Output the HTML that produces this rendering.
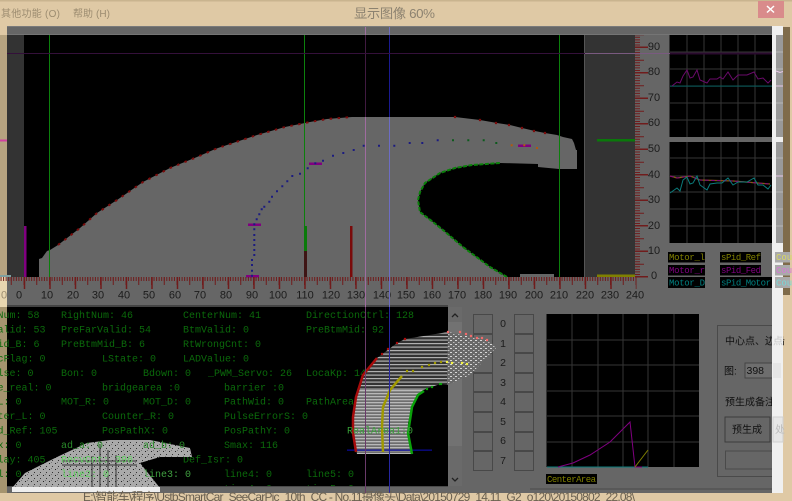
<!DOCTYPE html>
<html lang="zh">
<head>
<meta charset="utf-8">
<title>显示图像 60%</title>
<style>
html,body{margin:0;padding:0;width:792px;height:501px;overflow:hidden;background:#dfc9a5}
svg{display:block;filter:blur(.25px)}
.cn{font-family:"Liberation Sans","Noto Sans CJK SC",sans-serif}
.ax{font-family:"Liberation Sans",sans-serif;font-size:11px;fill:#1c1c1c;text-anchor:middle}
.m{font-family:"Liberation Mono",monospace;font-size:10px;fill:#0b6a0b;white-space:pre}
.l{font-family:"Liberation Mono",monospace;font-size:9px}
.b{fill:#666;stroke:#484848;stroke-width:1}
</style>
</head>
<body>
<svg width="792" height="501" viewBox="0 0 792 501" xmlns="http://www.w3.org/2000/svg">
<defs>
<clipPath id="tc"><rect x="-5" y="307" width="453" height="179"/></clipPath>
<pattern id="st" width="6" height="3" patternUnits="userSpaceOnUse"><rect width="6" height="3" fill="#6e6e6e"/><rect width="6" height="1.300" fill="#b8b8b8"/></pattern>
<pattern id="st2" width="6" height="3.500" patternUnits="userSpaceOnUse"><rect width="6" height="3.500" fill="#333"/><rect width="6" height="1.200" fill="#b0b0b0"/></pattern>
<pattern id="dt" width="5" height="4" patternUnits="userSpaceOnUse"><rect width="5" height="4" fill="#686868"/><rect width="2" height="1" fill="#d8d8d8"/><rect x="3" y="2" width="1.500" height="1" fill="#c0c0c0"/></pattern>
<pattern id="sp" width="6" height="6" patternUnits="userSpaceOnUse"><rect width="6" height="6" fill="#aaa"/><rect x="1" y="1" width="1" height="1" fill="#222"/><rect x="4" y="4" width="1" height="1" fill="#333"/><rect x="3" y="0" width="1" height="1" fill="#777"/></pattern>
</defs>

<!-- title area -->
<rect width="792" height="501" fill="#dfc9a5"/>
<rect width="792" height="1.500" fill="#c9b48f"/>
<g class="cn">
<text x="1" y="17" font-size="10" fill="#9c8c70" textLength="59">其他功能 (O)</text>
<text x="73" y="17" font-size="10" fill="#9c8c70" textLength="37">帮助 (H)</text>
<text x="354" y="18" font-size="13.300" fill="#8c8270" textLength="81">显示图像 60%</text>
</g>
<rect x="758" y="1" width="26" height="17" fill="#d98b8b"/>
<path d="M767 6l7 6.500M774 6l-7 6.500" stroke="#fff" stroke-width="1.500"/>

<!-- left strip -->
<rect x="0" y="35" width="7" height="242" fill="#b6a380"/>
<rect x="0" y="277" width="7" height="30" fill="#e8d6b0"/>
<rect x="0" y="307" width="7" height="186" fill="#a5946f"/>
<rect x="0" y="139.500" width="11" height="2" fill="#d040a0"/>

<!-- window -->
<rect x="7" y="26" width="765" height="467" fill="#666"/>
<rect x="7" y="26" width="765" height="1" fill="#7a7a7a"/>
<rect x="7" y="34" width="765" height="1" fill="#757575"/>
<rect x="7" y="35" width="17" height="242" fill="#333"/>
<rect x="24" y="35" width="561" height="242" fill="#000"/>
<rect x="584" y="35" width="1" height="242" fill="#555"/>
<rect x="585" y="35" width="50" height="242" fill="#333"/>

<!-- road shape -->
<path fill="#666" d="M39 277V259L42 258L47 251L50 250L58 245L80 228L97 213L117 200L143 182L170 168L197 157L213 150L218 148L233 143L257 135L285 127L310 122L327 119L352 117H455L480 120L497 123L510 125L522 128L535 131L545 133L557 135L563 137L572 139L574 143L576 150L577 150V169H559L538 167V164L500 163L472 165L455 168L440 173L425 183L420 192L418 200L420 212L433 222L443 230L463 247L490 267L507 277Z"/>
<rect x="520" y="274" width="34" height="3" fill="#666"/>
<polyline fill="none" stroke="#7c0c0c" stroke-width="2" stroke-dasharray="2.500 5.500" points="58,245 80,228 97,213 117,200 143,182 170,168 197,157 213,150 218,148 233,143 257,135 285,127 310,122 327,119 352,117"/>
<path d="M455 117h0M480 120h0M496 123h0M509 125h0M522 128h0M534 131h0M545 133h0" stroke="#7c0c0c" stroke-width="2.200" stroke-linecap="square"/>
<polyline fill="none" stroke="#0a800a" stroke-width="2" stroke-dasharray="4 1.500" points="507,277 490,267 463,247 443,230 433,222 420,212 418,200 420,192 425,183 440,173 455,168 472,165 500,163"/>

<!-- vertical lines -->
<rect x="49" y="35" width="1" height="242" fill="#0c800c"/>
<rect x="304" y="35" width="1" height="242" fill="#0c800c"/>
<rect x="559" y="35" width="1" height="242" fill="#0c800c"/>

<!-- bars -->
<rect x="24" y="226" width="2.500" height="51" fill="#800080"/>
<rect x="304" y="226" width="3" height="25" fill="#0a7a0a"/>
<rect x="304" y="251" width="3" height="26" fill="#3e1414"/>
<rect x="350" y="226" width="2.500" height="51" fill="#7a0a0a"/>
<rect x="248" y="223.500" width="13" height="2.500" fill="#800080"/>
<rect x="246" y="275" width="13" height="2.500" fill="#800080"/>
<rect x="309" y="162.500" width="13" height="2.500" fill="#800080"/>
<rect x="518" y="144.500" width="13" height="2.500" fill="#800080"/>
<rect x="597" y="139" width="38" height="2.500" fill="#0a780a"/>
<rect x="597" y="274.500" width="38" height="2.500" fill="#808000"/>
<rect x="0" y="275" width="11" height="2" fill="#7fa0a0"/>

<!-- center dots -->
<path fill="none" stroke="#1c1c80" stroke-width="2" stroke-linecap="square" d="M252 275.700h0M252 270.700h0M252 265h0M252 260h0M254.300 255h0M254.300 250h0M254.300 245h0M254.300 240h0M254.300 235h0M254.300 229.300h0M254.300 224.300h0M256.700 219.300h0M259.300 214.300h0M261.700 209.300h0M264.300 206.700h0M269.300 201.700h0M272 196.700h0M277 191.300h0M282.300 186.300h0M287.300 181.300h0M292.300 176h0M300 173.700h0M307.700 168.300h0M315.300 163.300h0M323 160.700h0M333 155.700h0M343.300 153h0M353.700 150h0M363.700 145.700h0M379 145.700h0M394.300 145.700h0M409.700 143h0M422.300 143h0M437.700 140.300h0"/>
<path fill="none" stroke="#0c5a1c" stroke-width="2" stroke-linecap="square" d="M453 140.300h0M468.300 140.300h0M483.700 140.300h0M496.300 143h0"/>
<path fill="none" stroke="#b05a10" stroke-width="2" stroke-linecap="square" d="M511.700 145.300h0M524.300 145.300h0M537 148h0"/>

<!-- axis ticks -->
<g stroke="#701c1c" fill="none">
<line x1=".55" x2="636.500" y1="279" y2="279" stroke-width="4" stroke-dasharray="1 1.550"/>
<line x1="10.750" x2="636.500" y1="281" y2="281" stroke-width="8" stroke-dasharray="1 11.750"/>
<line x1="-1.750" x2="636.500" y1="283" y2="283" stroke-width="12" stroke-dasharray="1.500 24"/>
<line x1="637.500" x2="637.500" y1="277.500" y2="35" stroke-width="5" stroke-dasharray="1 1.550"/>
<line x1="639.500" x2="639.500" y1="264.750" y2="35" stroke-width="9" stroke-dasharray="1 11.750"/>
<line x1="641.500" x2="641.500" y1="277.500" y2="35" stroke-width="13" stroke-dasharray="1.500 24"/>
</g>

<!-- axis labels -->
<g class="ax">
<text x="4" y="298.500" style="fill:#9c8c70">0</text>
<text x="19" y="298.500">0</text><text x="47" y="298.500">10</text><text x="73" y="298.500">20</text><text x="98" y="298.500">30</text><text x="124" y="298.500">40</text><text x="149" y="298.500">50</text><text x="175" y="298.500">60</text><text x="200" y="298.500">70</text><text x="226" y="298.500">80</text><text x="252" y="298.500">90</text><text x="278" y="298.500">100</text><text x="305" y="298.500">110</text><text x="331" y="298.500">120</text><text x="356" y="298.500">130</text><text x="382" y="298.500">140</text><text x="406" y="298.500">150</text><text x="432" y="298.500">160</text><text x="457" y="298.500">170</text><text x="483" y="298.500">180</text><text x="508" y="298.500">190</text><text x="534" y="298.500">200</text><text x="559" y="298.500">210</text><text x="585" y="298.500">220</text><text x="610" y="298.500">230</text><text x="635" y="298.500">240</text>
<text x="654" y="50">90</text><text x="654" y="75">80</text><text x="654" y="101">70</text><text x="654" y="126">60</text><text x="654" y="152">50</text><text x="654" y="178">40</text><text x="654" y="203">30</text><text x="654" y="229">20</text><text x="654" y="254">10</text><text x="654" y="279">0</text>
</g>

<!-- top right graph 1 -->
<rect x="669.500" y="35" width="103" height="102" fill="#000"/>
<path stroke="#363636" fill="none" d="M687 35V137M704 35V137M721 35V137M738 35V137M755 35V137M670 52H772M670 69H772M670 86H772M670 103H772M670 120H772"/>
<rect x="670" y="85.500" width="102" height="1.200" fill="#0b5555"/>
<polyline fill="none" stroke="#6a0a6a" stroke-width="1" points="672,86 677,82 680,83 683,76 687,70 690,78 693,77 697,70 700,80 707,83 710,79 717,79 720,77 723,79 728,72 733,80 738,75 747,75 754,72 758,79 763,78 768,83 771,80"/>

<!-- top right graph 2 -->
<rect x="669.500" y="142" width="103" height="101" fill="#000"/>
<path stroke="#363636" fill="none" d="M687 142V243M704 142V243M721 142V243M738 142V243M755 142V243M670 158H772M670 176H772M670 192H772M670 209H772M670 226H772"/>
<polyline fill="none" stroke="#806a00" stroke-width="1.200" points="670,176 677,178 690,176 700,180 733,181 770,184"/>
<polyline fill="none" stroke="#800080" stroke-width="1" stroke-dasharray="4 2" points="670,176 677,178 690,176 700,180 733,181 770,184"/>
<polyline fill="none" stroke="#0b7b7b" stroke-width="1" points="670,193 677,188 680,191 683,180 687,177 690,184 693,183 697,176 700,185 707,190 710,184 717,183 722,183 728,178 733,185 738,182 747,182 754,178 758,185 763,185 768,189 771,185"/>

<!-- legends -->
<rect x="668" y="252" width="37" height="10.500" fill="#000"/><rect x="668" y="265" width="37" height="10.500" fill="#000"/><rect x="668" y="277" width="37" height="11" fill="#000"/>
<rect x="720" y="252" width="41" height="10.500" fill="#000"/><rect x="720" y="265" width="41" height="10.500" fill="#000"/><rect x="720" y="277" width="52" height="11" fill="#000"/>
<g class="l">
<text x="669" y="260" fill="#808000" textLength="36">Motor_l</text><text x="669" y="273" fill="#800080" textLength="36">Motor_r</text><text x="669" y="285.500" fill="#008080" textLength="36">Motor_D</text>
<text x="721" y="260" fill="#808000" textLength="40">sPid_Ref</text><text x="721" y="273" fill="#800080" textLength="40">sPid_Fed</text><text x="721" y="285.500" fill="#008080" textLength="50">sPid_Motor</text>
</g>

<!-- text panel -->
<rect x="7" y="305" width="441" height="2" fill="#444"/>
<rect x="7" y="307" width="441" height="179" fill="#000"/>
<rect x="7" y="486" width="441" height="1" fill="#4a4a4a"/>
<g class="m" clip-path="url(#tc)">
<text x="-2.500" y="318">Num: 58</text><text x="61" y="318">RightNum: 46</text><text x="183" y="318">CenterNum: 41</text><text x="306" y="318">DirectionCtrl: 128</text>
<text x="-2.500" y="332.500">alid: 53</text><text x="61" y="332.500">PreFarValid: 54</text><text x="183" y="332.500">BtmValid: 0</text><text x="306" y="332.500">PreBtmMid: 92</text>
<text x="-2.500" y="347">id_B: 6</text><text x="61" y="347">PreBtmMid_B: 6</text><text x="183" y="347">RtWrongCnt:  0</text>
<text x="-2.500" y="361.400">cFlag: 0</text><text x="102" y="361.400">LState: 0</text><text x="183" y="361.400">LADValue: 0</text>
<text x="-2.500" y="375.800">lse: 0</text><text x="61" y="375.800">Bon: 0</text><text x="143" y="375.800">Bdown: 0</text><text x="208" y="375.800">_PWM_Servo: 26</text><text x="306" y="375.800">LocaKp: 1464</text>
<text x="-2.500" y="390.300">e_real: 0</text><text x="102" y="390.300">bridgearea :0</text><text x="224" y="390.300">barrier :0</text>
<text x="-2.500" y="404.700">L: 0</text><text x="61" y="404.700">MOT_R: 0</text><text x="143" y="404.700">MOT_D: 0</text><text x="224" y="404.700">PathWid: 0</text><text x="306" y="404.700">PathArea: 0</text>
<text x="-2.500" y="419.200">ter_L: 0</text><text x="102" y="419.200">Counter_R: 0</text><text x="224" y="419.200">PulseErrorS: 0</text>
<text x="-2.500" y="433.600">d_Ref: 105</text><text x="102" y="433.600">PosPathX: 0</text><text x="224" y="433.600">PosPathY: 0</text>
<text x="-2.500" y="448">x: 0</text><text x="224" y="448">Smax: 116</text>
<text x="-2.500" y="462.500">lay: 405</text><text x="183" y="462.500">Def_Isr: 0</text>
<text x="-2.500" y="476.900">l: 0</text><text x="224" y="476.900">line4: 0</text><text x="306" y="476.900">line5: 0</text>
<text x="224" y="491.300">time4: 0</text><text x="306" y="491.300">time5: 0</text>
</g>

<!-- mini camera image -->
<path fill="url(#sp)" d="M12 488L25 473L57 457L87 443L110 440H150L190 448L192 457H160L140 463L160 488Z"/>
<rect x="12" y="487" width="148" height="5" fill="#eee"/>
<path d="M62 461H137M62 465H137M100 445V487M108 450V487M116 455V487M92 456V487" stroke="#333" stroke-width="1" fill="none"/>
<g class="m">
<text x="61" y="448" style="fill:#2a8a2a">ad_a: 0</text>
<text x="143" y="448" style="fill:#2a8a2a">ad_b: 0</text>
<text x="61" y="462.500" style="fill:#60d060">RecvCnt: 396</text>
<text x="61" y="476.900" style="fill:#60d060">line2: 0</text>
<text x="143" y="476.900" style="fill:#40a040">line3: 0</text>
</g>

<!-- scrollbar -->
<rect x="448" y="307" width="14" height="179" fill="#6a6a6a"/>
<rect x="448" y="322" width="14" height="124" fill="#727272"/>
<path d="M452 317l3-3 3 3M452 478l3 3 3-3" stroke="#222" stroke-width="1.300" fill="none"/>

<!-- buttons -->
<g>
<rect class="b" x="473.500" y="314.500" width="19" height="19"/><rect class="b" x="473.500" y="334.500" width="19" height="18"/><rect class="b" x="473.500" y="353.500" width="19" height="19"/><rect class="b" x="473.500" y="373.500" width="19" height="18"/><rect class="b" x="473.500" y="392.500" width="19" height="19"/><rect class="b" x="473.500" y="412.500" width="19" height="19"/><rect class="b" x="473.500" y="432.500" width="19" height="18"/><rect class="b" x="473.500" y="451.500" width="19" height="19"/>
<rect class="b" x="514.500" y="314.500" width="19" height="19"/><rect class="b" x="514.500" y="334.500" width="19" height="18"/><rect class="b" x="514.500" y="353.500" width="19" height="19"/><rect class="b" x="514.500" y="373.500" width="19" height="18"/><rect class="b" x="514.500" y="392.500" width="19" height="19"/><rect class="b" x="514.500" y="412.500" width="19" height="19"/><rect class="b" x="514.500" y="432.500" width="19" height="18"/><rect class="b" x="514.500" y="451.500" width="19" height="19"/>
</g>
<g class="ax" style="font-size:10.500px">
<text x="503" y="327">0</text><text x="503" y="347">1</text><text x="503" y="366">2</text><text x="503" y="386">3</text><text x="503" y="405">4</text><text x="503" y="425">5</text><text x="503" y="444">6</text><text x="503" y="464">7</text>
</g>

<!-- perspective view -->
<path fill="url(#st)" d="M357 454L353 433V417L356 397L358 390H423L413 403L408 423L412 454Z"/>
<path fill="url(#st2)" d="M358 390L363 375L377 358L397 343L405 339L448 332V385L440 384L423 390Z"/>
<path fill="url(#dt)" d="M448 332L487 340L497 347L470 375L447 385Z"/>
<rect x="347" y="449.500" width="85" height="1.300" fill="#0a0a90"/>
<polyline fill="none" stroke="#a80c0c" stroke-width="2.500" points="356,452 353,433 353,417 356,397 363,375 377,358"/>
<path fill="none" stroke="#a80c0c" stroke-width="2.200" stroke-linecap="square" d="M382 354h0M388 349h0M397 343h0M405 339h0"/>
<path fill="none" stroke="#f06a6a" stroke-width="2.200" stroke-linecap="square" d="M448 332h0M460 332h0M466 334h0M471 336h0M477 338h0M482 338h0M487 340h0"/>
<polyline fill="none" stroke="#a09a00" stroke-width="2.500" points="383,452 382,427 383,407 390,390 402,376"/>
<path fill="none" stroke="#a09a00" stroke-width="2.200" stroke-linecap="square" d="M407 371h0M413 371h0M422 367h0M429 365h0M435 363h0M441 362h0"/>
<path fill="none" stroke="#f0f040" stroke-width="2.200" stroke-linecap="square" d="M447 362h0M452 363h0M462 363h0M467 364h0"/>
<polyline fill="none" stroke="#0aa00a" stroke-width="2.500" points="412,454 408,433 412,407 418,395 424,391"/>
<path fill="none" stroke="#0aa00a" stroke-width="2.200" stroke-linecap="square" d="M427 389h0M432 387h0M440 384h1"/>
<text class="m" x="347" y="433.600" style="fill:#38a038">RealArea1:0</text>

<!-- bottom graph -->
<rect x="546.500" y="314" width="152.500" height="153" fill="#000"/>
<path stroke="#363636" fill="none" d="M572 314V467M598 314V467M623 314V467M648 314V467M674 314V467M547 340H699M547 365H699M547 391H699M547 416H699M547 442H699"/>
<rect x="547" y="466.500" width="101" height="1" fill="#0b7b7b"/>
<polyline fill="none" stroke="#800080" stroke-width="1" points="558,467 573,463 590,455 610,442 630,422 635,467 642,467"/>
<polyline fill="none" stroke="#808000" stroke-width="1" points="635,467 648,450"/>
<rect x="546" y="474" width="51" height="10" fill="#000"/>
<text class="l" x="547" y="482" fill="#808000" textLength="49">CenterArea</text>

<!-- group box -->
<rect x="717.500" y="325.500" width="56" height="151" fill="none" stroke="#4a4a4a"/>
<g class="cn" font-size="10" fill="#111">
<text x="725" y="344.500">中心点、边沿</text>
<text x="724" y="374.500">图:</text>
<text x="725" y="405.500">预生成备注:</text>
</g>
<rect x="745" y="363" width="28" height="15" fill="#6e6e6e" stroke="#444"/>
<text x="746.500" y="374" font-family="Liberation Sans" font-size="10.500" fill="#111">398</text>
<rect x="725" y="417" width="45" height="25" fill="#666" stroke="#3c3c3c"/>
<text class="cn" x="732" y="433" font-size="10" fill="#111">预生成</text>
<rect x="725.500" y="451" width="47" height="18" fill="#666" stroke="#4a4a4a"/>
<rect x="530" y="488.500" width="242" height="1" fill="#4a4a4a"/>

<!-- vertical overlay lines -->
<rect x="365" y="27" width="1" height="8" fill="#a070a0"/>
<rect x="389" y="27" width="1" height="8" fill="#7070c0"/>
<path d="M365.500 35V117" stroke="#401a40"/><path d="M365.500 117V277" stroke="#a06ca0"/>
<path d="M389.500 35V117" stroke="#1a1a90"/><path d="M389.500 117V277" stroke="#6c6cc4"/>
<path d="M365.500 277V307" stroke="#a06ca0"/><path d="M389.500 277V307" stroke="#6c6cc4"/>
<path d="M365.500 307V495" stroke="#6a3a6a"/><path d="M389.500 307V495" stroke="#2626a0"/>
<rect x="7" y="53" width="578" height="1" fill="#34103a"/>
<rect x="585" y="53" width="85" height="1" fill="#7a5a80"/>
<rect x="670" y="52.500" width="102" height="2" fill="#2a0a2e"/>

<!-- right strip -->
<rect x="772" y="26" width="11" height="467" fill="#f0f0f0"/>
<rect x="776" y="35" width="7" height="102" fill="#999"/>
<rect x="776" y="142" width="7" height="101" fill="#999"/>
<path stroke="#b8b8b8" d="M776 52H783M776 69H783M776 86H783M776 103H783M776 120H783M776 158H783M776 176H783M776 192H783M776 209H783M776 226H783"/>
<rect x="783" y="27" width="7" height="268" fill="#7f6b4a"/>
<path d="M776 71l4 1.500 3-1M776 86H783M776 176H783" stroke="#e8c8e8" stroke-width="1" fill="none"/>
<rect x="775" y="252" width="15" height="10.500" fill="#aaa"/><rect x="775" y="265" width="15" height="10.500" fill="#aaa"/><rect x="775" y="277" width="15" height="11" fill="#aaa"/>
<g class="l">
<text x="776" y="260" fill="#d8d860">Cou</text><text x="776" y="273" fill="#d878d8">Cou</text><text x="776" y="285.500" fill="#78d8d8">Cou</text>
</g>
<rect x="773" y="363" width="8" height="15" fill="#e6e6e6"/>
<text class="cn" x="773" y="344.500" font-size="10" fill="#c8c8c8">点</text>
<rect x="773" y="417" width="10" height="25" fill="#e6e6e6" stroke="#d0d0d0"/>
<text class="cn" x="775" y="433" font-size="10" fill="#bbb">处</text>

<!-- bottom status -->
<rect x="0" y="493" width="792" height="8" fill="#dfc9a5"/>
<text class="cn" x="83" y="501" font-size="12" fill="#6a6050" textLength="552">E:\智能车\程序\UstbSmartCar_SeeCarPic_10th_CC - No.11摄像头\Data\20150729_14.11_G2_o120\20150802_22.08\</text>
</svg>
</body>
</html>
